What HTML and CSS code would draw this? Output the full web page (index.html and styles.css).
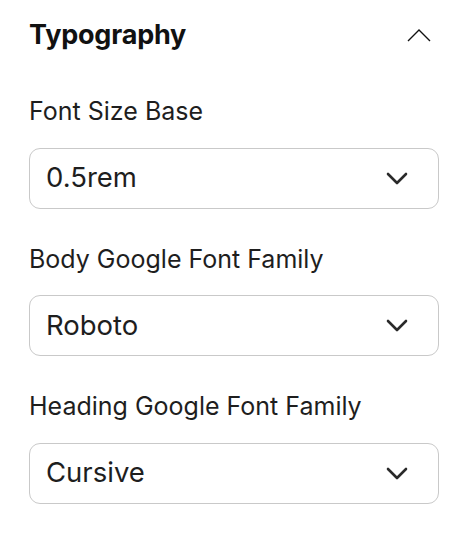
FILE: index.html
```html
<!DOCTYPE html>
<html>
<head>
<meta charset="utf-8">
<link rel="stylesheet" href="styles.css">
</head>
<body>
<div class="panel">
  <div class="header">
    <h2 class="title">Typography</h2>
    <svg class="toggle" width="24" height="13" viewBox="0 0 24 13"><path d="M1 12 L12 1 L23 12" fill="none" stroke="#111" stroke-width="1.4"/></svg>
  </div>
  <div class="field">
    <label class="label">Font Size Base</label>
    <div class="select"><span>0.5rem</span><svg class="chev" width="22" height="13" viewBox="0 0 22 13"><path d="M2 2 L11 11 L20 2" fill="none" stroke="#2a2a2a" stroke-width="2.6" stroke-linecap="round" stroke-linejoin="round"/></svg></div>
  </div>
  <div class="field">
    <label class="label">Body Google Font Family</label>
    <div class="select"><span>Roboto</span><svg class="chev" width="22" height="13" viewBox="0 0 22 13"><path d="M2 2 L11 11 L20 2" fill="none" stroke="#2a2a2a" stroke-width="2.6" stroke-linecap="round" stroke-linejoin="round"/></svg></div>
  </div>
  <div class="field">
    <label class="label">Heading Google Font Family</label>
    <div class="select"><span>Cursive</span><svg class="chev" width="22" height="13" viewBox="0 0 22 13"><path d="M2 2 L11 11 L20 2" fill="none" stroke="#2a2a2a" stroke-width="2.6" stroke-linecap="round" stroke-linejoin="round"/></svg></div>
  </div>
</div>
</body>
</html>
```
FILE: styles.css
```css
html, body { margin: 0; padding: 0; background: #fff; }
body { font-family: Inter, "Noto Sans", sans-serif; color: #1e1e1e; }
.panel { padding: 18px 33px 0 29px; display: flex; flex-direction: column; }
.header { display: flex; align-items: center; justify-content: space-between; height: 34px; margin-bottom: 44px; }
.title { margin: 0; font-size: 27px; line-height: 34px; font-weight: 700; color: #111; letter-spacing: -0.2px; }
.toggle { margin-right: 8px; display: block; }
.field { display: flex; flex-direction: column; margin-bottom: 35px; }
.label { font-size: 25px; line-height: 30px; margin-bottom: 21.5px; }
.select { box-sizing: border-box; height: 61px; border: 1.5px solid #c9c9c9; border-radius: 11px; display: flex; align-items: center; justify-content: space-between; padding: 0 30px 2px 16px; font-size: 27.5px; color: #1e1e1e; }
.chev { display: block; margin-top: 2px; }
```
